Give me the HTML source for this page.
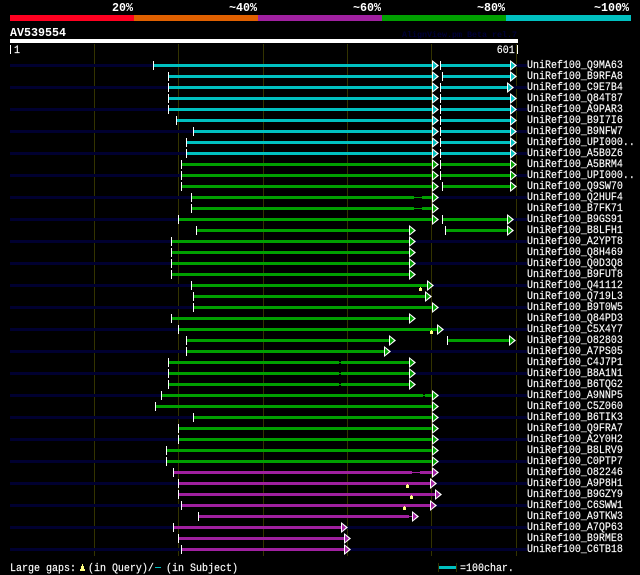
<!DOCTYPE html>
<html><head><meta charset="utf-8"><title>AV539554</title>
<style>
html,body{margin:0;padding:0;background:#000;width:640px;height:575px;overflow:hidden}
svg{display:block}
text{font-family:"Liberation Mono",monospace;fill:#fff;white-space:pre}
.l text{font-size:11.5px;stroke:#fff;stroke-width:.15px}
.b text{font-size:11.67px;font-weight:bold}
path{fill:none}
</style></head><body>
<svg width="640" height="575" viewBox="0 0 640 575" xmlns="http://www.w3.org/2000/svg">
<rect x="10" y="15" width="124" height="6" fill="#ff0020"/>
<rect x="134" y="15" width="124" height="6" fill="#e06000"/>
<rect x="258" y="15" width="124" height="6" fill="#a020a0"/>
<rect x="382" y="15" width="124" height="6" fill="#00a000"/>
<rect x="506" y="15" width="125" height="6" fill="#00c0c0"/>
<g class="b">
<text x="112" y="11">20%</text><text x="229" y="11">~40%</text><text x="353" y="11">~60%</text><text x="477" y="11">~80%</text><text x="594" y="11">~100%</text>
<text x="10" y="36">AV539554</text>
</g>
<text x="402" y="37" style="font-size:8.33px;font-weight:bold;fill:#000038">AlignView.pm Beta rel.7</text>
<rect x="10" y="39" width="508" height="4" fill="#fff"/>
<path d="M10.5 45v9M517.5 45v9" stroke="#fff"/>
<path d="M94.5 44V556M178.5 44V556M263.5 44V556M347.5 44V556M431.5 44V556M516.5 44V556" stroke="#333300"/>
<g transform="scale(.87 1)" class="l"><text x="16.1" y="53">1</text><text x="571" y="53">601</text></g>

<path style="fill:#000030" d="M10 64H153v3H10zM516 64H527v3H516zM10 86H168v3H10zM513 86H527v3H513zM10 108H168v3H10zM516 108H527v3H516zM10 130H193v3H10zM516 130H527v3H516zM10 152H186v3H10zM516 152H527v3H516zM10 174H181v3H10zM516 174H527v3H516zM10 196H191v3H10zM438 196H527v3H438zM10 218H178v3H10zM513 218H527v3H513zM10 240H171v3H10zM415 240H527v3H415zM10 262H171v3H10zM415 262H527v3H415zM10 284H191v3H10zM433 284H527v3H433zM10 306H193v3H10zM438 306H527v3H438zM10 328H178v3H10zM443 328H527v3H443zM10 350H186v3H10zM390 350H527v3H390zM10 372H168v3H10zM415 372H527v3H415zM10 394H161v3H10zM438 394H527v3H438zM10 416H193v3H10zM438 416H527v3H438zM10 438H178v3H10zM438 438H527v3H438zM10 460H166v3H10zM438 460H527v3H438zM10 482H178v3H10zM436 482H527v3H436zM10 504H181v3H10zM436 504H527v3H436zM10 526H173v3H10zM347 526H527v3H347zM10 548H181v3H10zM350 548H527v3H350z"/>

<path style="fill:#00c0c0" d="M154 64H432v3H154zM441 64H510v3H441zM169 75H432v3H169zM443 75H510v3H443zM169 86H432v3H169zM441 86H507v3H441zM169 97H432v3H169zM441 97H510v3H441zM169 108H432v3H169zM441 108H510v3H441zM177 119H432v3H177zM441 119H510v3H441zM194 130H432v3H194zM441 130H510v3H441zM187 141H432v3H187zM441 141H510v3H441zM187 152H432v3H187zM441 152H510v3H441z"/>
<path style="fill:#00a000" d="M182 163H432v3H182zM441 163H510v3H441zM182 174H432v3H182zM441 174H510v3H441zM182 185H432v3H182zM443 185H510v3H443zM192 196H414v3H192zM422 196H432v3H422zM192 207H414v3H192zM422 207H432v3H422zM179 218H432v3H179zM443 218H507v3H443zM197 229H409v3H197zM446 229H507v3H446zM172 240H409v3H172zM172 251H409v3H172zM172 262H409v3H172zM172 273H409v3H172zM192 284H427v3H192zM194 295H425v3H194zM194 306H432v3H194zM172 317H409v3H172zM179 328H437v3H179zM187 339H389v3H187zM448 339H509v3H448zM187 350H384v3H187zM169 361H339v3H169zM341 361H409v3H341zM169 372H339v3H169zM341 372H409v3H341zM169 383H339v3H169zM341 383H409v3H341zM162 394H423v3H162zM425 394H432v3H425zM156 405H432v3H156zM194 416H432v3H194zM179 427H432v3H179zM179 438H432v3H179zM167 449H432v3H167zM167 460H432v3H167zM414 197h8v1h-8zM414 208h8v1h-8zM339 362h2v1h-2zM339 373h2v1h-2zM339 384h2v1h-2zM423 395h2v1h-2z"/>
<path style="fill:#a020a0" d="M174 471H412v3H174zM420 471H432v3H420zM179 482H430v3H179zM179 493H435v3H179zM182 504H430v3H182zM199 515H409v3H199zM174 526H341v3H174zM179 537H344v3H179zM182 548H344v3H182zM412 472h8v1h-8zM409 516h3v1h-3z"/>

<path stroke="#fff" d="M153.5 61v9M168.5 72v9M168.5 83v9M168.5 94v9M168.5 105v9M176.5 116v9M193.5 127v9M186.5 138v9M186.5 149v9M181.5 160v9M181.5 171v9M181.5 182v9M191.5 193v9M191.5 204v9M178.5 215v9M196.5 226v9M171.5 237v9M171.5 248v9M171.5 259v9M171.5 270v9M191.5 281v9M193.5 292v9M193.5 303v9M171.5 314v9M178.5 325v9M186.5 336v9M186.5 347v9M168.5 358v9M168.5 369v9M168.5 380v9M161.5 391v9M155.5 402v9M193.5 413v9M178.5 424v9M178.5 435v9M166.5 446v9M166.5 457v9M173.5 468v9M178.5 479v9M178.5 490v9M181.5 501v9M198.5 512v9M173.5 523v9M178.5 534v9M181.5 545v9M440.5 61v9M442.5 72v9M440.5 83v9M440.5 94v9M440.5 105v9M440.5 116v9M440.5 127v9M440.5 138v9M440.5 149v9M440.5 160v9M440.5 171v9M442.5 182v9M442.5 215v9M445.5 226v9M447.5 336v9"/>

<path style="fill:#fff" d="M432 60l7 5.5-7 5.5zM510 60l7 5.5-7 5.5zM432 71l7 5.5-7 5.5zM510 71l7 5.5-7 5.5zM432 82l7 5.5-7 5.5zM507 82l7 5.5-7 5.5zM432 93l7 5.5-7 5.5zM510 93l7 5.5-7 5.5zM432 104l7 5.5-7 5.5zM510 104l7 5.5-7 5.5zM432 115l7 5.5-7 5.5zM510 115l7 5.5-7 5.5zM432 126l7 5.5-7 5.5zM510 126l7 5.5-7 5.5zM432 137l7 5.5-7 5.5zM510 137l7 5.5-7 5.5zM432 148l7 5.5-7 5.5zM510 148l7 5.5-7 5.5zM432 159l7 5.5-7 5.5zM510 159l7 5.5-7 5.5zM432 170l7 5.5-7 5.5zM510 170l7 5.5-7 5.5zM432 181l7 5.5-7 5.5zM510 181l7 5.5-7 5.5zM432 192l7 5.5-7 5.5zM432 203l7 5.5-7 5.5zM432 214l7 5.5-7 5.5zM507 214l7 5.5-7 5.5zM409 225l7 5.5-7 5.5zM507 225l7 5.5-7 5.5zM409 236l7 5.5-7 5.5zM409 247l7 5.5-7 5.5zM409 258l7 5.5-7 5.5zM409 269l7 5.5-7 5.5zM427 280l7 5.5-7 5.5zM425 291l7 5.5-7 5.5zM432 302l7 5.5-7 5.5zM409 313l7 5.5-7 5.5zM437 324l7 5.5-7 5.5zM389 335l7 5.5-7 5.5zM509 335l7 5.5-7 5.5zM384 346l7 5.5-7 5.5zM409 357l7 5.5-7 5.5zM409 368l7 5.5-7 5.5zM409 379l7 5.5-7 5.5zM432 390l7 5.5-7 5.5zM432 401l7 5.5-7 5.5zM432 412l7 5.5-7 5.5zM432 423l7 5.5-7 5.5zM432 434l7 5.5-7 5.5zM432 445l7 5.5-7 5.5zM432 456l7 5.5-7 5.5zM432 467l7 5.5-7 5.5zM430 478l7 5.5-7 5.5zM435 489l7 5.5-7 5.5zM430 500l7 5.5-7 5.5zM412 511l7 5.5-7 5.5zM341 522l7 5.5-7 5.5zM344 533l7 5.5-7 5.5zM344 544l7 5.5-7 5.5z"/>
<path style="fill:#00c0c0" d="M433 62l4 3.5-4 3.5zM511 62l4 3.5-4 3.5zM433 73l4 3.5-4 3.5zM511 73l4 3.5-4 3.5zM433 84l4 3.5-4 3.5zM508 84l4 3.5-4 3.5zM433 95l4 3.5-4 3.5zM511 95l4 3.5-4 3.5zM433 106l4 3.5-4 3.5zM511 106l4 3.5-4 3.5zM433 117l4 3.5-4 3.5zM511 117l4 3.5-4 3.5zM433 128l4 3.5-4 3.5zM511 128l4 3.5-4 3.5zM433 139l4 3.5-4 3.5zM511 139l4 3.5-4 3.5zM433 150l4 3.5-4 3.5zM511 150l4 3.5-4 3.5z"/>
<path style="fill:#00a000" d="M433 161l4 3.5-4 3.5zM511 161l4 3.5-4 3.5zM433 172l4 3.5-4 3.5zM511 172l4 3.5-4 3.5zM433 183l4 3.5-4 3.5zM511 183l4 3.5-4 3.5zM433 194l4 3.5-4 3.5zM433 205l4 3.5-4 3.5zM433 216l4 3.5-4 3.5zM508 216l4 3.5-4 3.5zM410 227l4 3.5-4 3.5zM508 227l4 3.5-4 3.5zM410 238l4 3.5-4 3.5zM410 249l4 3.5-4 3.5zM410 260l4 3.5-4 3.5zM410 271l4 3.5-4 3.5zM428 282l4 3.5-4 3.5zM426 293l4 3.5-4 3.5zM433 304l4 3.5-4 3.5zM410 315l4 3.5-4 3.5zM438 326l4 3.5-4 3.5zM390 337l4 3.5-4 3.5zM510 337l4 3.5-4 3.5zM385 348l4 3.5-4 3.5zM410 359l4 3.5-4 3.5zM410 370l4 3.5-4 3.5zM410 381l4 3.5-4 3.5zM433 392l4 3.5-4 3.5zM433 403l4 3.5-4 3.5zM433 414l4 3.5-4 3.5zM433 425l4 3.5-4 3.5zM433 436l4 3.5-4 3.5zM433 447l4 3.5-4 3.5zM433 458l4 3.5-4 3.5z"/>
<path style="fill:#a020a0" d="M433 469l4 3.5-4 3.5zM431 480l4 3.5-4 3.5zM436 491l4 3.5-4 3.5zM431 502l4 3.5-4 3.5zM413 513l4 3.5-4 3.5zM342 524l4 3.5-4 3.5zM345 535l4 3.5-4 3.5zM345 546l4 3.5-4 3.5z"/>

<path style="fill:#ffff80" d="M420 287h1v1h1v3h-3v-3h1zM431 330h1v1h1v3h-3v-3h1zM407 484h1v1h1v3h-3v-3h1zM411 495h1v1h1v3h-3v-3h1zM404 506h1v1h1v3h-3v-3h1zM82 564h1v2h1v3h1v2h-5v-2h1v-3h1z"/>

<g transform="scale(.87 1)" class="l">
<text x="605.7" y="68">UniRef100_Q9MA63</text>
<text x="605.7" y="79">UniRef100_B9RFA8</text>
<text x="605.7" y="90">UniRef100_C9E7B4</text>
<text x="605.7" y="101">UniRef100_Q84T87</text>
<text x="605.7" y="112">UniRef100_A9PAR3</text>
<text x="605.7" y="123">UniRef100_B9I7I6</text>
<text x="605.7" y="134">UniRef100_B9NFW7</text>
<text x="605.7" y="145">UniRef100_UPI000..</text>
<text x="605.7" y="156">UniRef100_A5B0Z6</text>
<text x="605.7" y="167">UniRef100_A5BRM4</text>
<text x="605.7" y="178">UniRef100_UPI000..</text>
<text x="605.7" y="189">UniRef100_Q9SW70</text>
<text x="605.7" y="200">UniRef100_Q2HUF4</text>
<text x="605.7" y="211">UniRef100_B7FK71</text>
<text x="605.7" y="222">UniRef100_B9GS91</text>
<text x="605.7" y="233">UniRef100_B8LFH1</text>
<text x="605.7" y="244">UniRef100_A2YPT8</text>
<text x="605.7" y="255">UniRef100_Q8H469</text>
<text x="605.7" y="266">UniRef100_Q0D3Q8</text>
<text x="605.7" y="277">UniRef100_B9FUT8</text>
<text x="605.7" y="288">UniRef100_Q41112</text>
<text x="605.7" y="299">UniRef100_Q719L3</text>
<text x="605.7" y="310">UniRef100_B9T0W5</text>
<text x="605.7" y="321">UniRef100_Q84PD3</text>
<text x="605.7" y="332">UniRef100_C5X4Y7</text>
<text x="605.7" y="343">UniRef100_O82803</text>
<text x="605.7" y="354">UniRef100_A7PS05</text>
<text x="605.7" y="365">UniRef100_C4J7P1</text>
<text x="605.7" y="376">UniRef100_B8A1N1</text>
<text x="605.7" y="387">UniRef100_B6TQG2</text>
<text x="605.7" y="398">UniRef100_A9NNP5</text>
<text x="605.7" y="409">UniRef100_C5Z060</text>
<text x="605.7" y="420">UniRef100_B6TIK3</text>
<text x="605.7" y="431">UniRef100_Q9FRA7</text>
<text x="605.7" y="442">UniRef100_A2Y0H2</text>
<text x="605.7" y="453">UniRef100_B8LRV9</text>
<text x="605.7" y="464">UniRef100_C0PTP7</text>
<text x="605.7" y="475">UniRef100_O82246</text>
<text x="605.7" y="486">UniRef100_A9P8H1</text>
<text x="605.7" y="497">UniRef100_B9GZY9</text>
<text x="605.7" y="508">UniRef100_C6SWW1</text>
<text x="605.7" y="519">UniRef100_A9TKW3</text>
<text x="605.7" y="530">UniRef100_A7QP63</text>
<text x="605.7" y="541">UniRef100_B9RME8</text>
<text x="605.7" y="552">UniRef100_C6TB18</text>
<text x="11.5" y="571">Large gaps:</text>
<text x="101.1" y="571">(in Query)/</text>
<text x="190.8" y="571">(in Subject)</text>
<text x="528.7" y="571">=100char.</text>
</g>
<rect x="155" y="567" width="6" height="1" fill="#00c0c0"/>
<path stroke="#333300" d="M438.5 563v9M456.5 563v9"/>
<rect x="439" y="566" width="17" height="3" fill="#00c0c0"/>
</svg>
</body></html>
